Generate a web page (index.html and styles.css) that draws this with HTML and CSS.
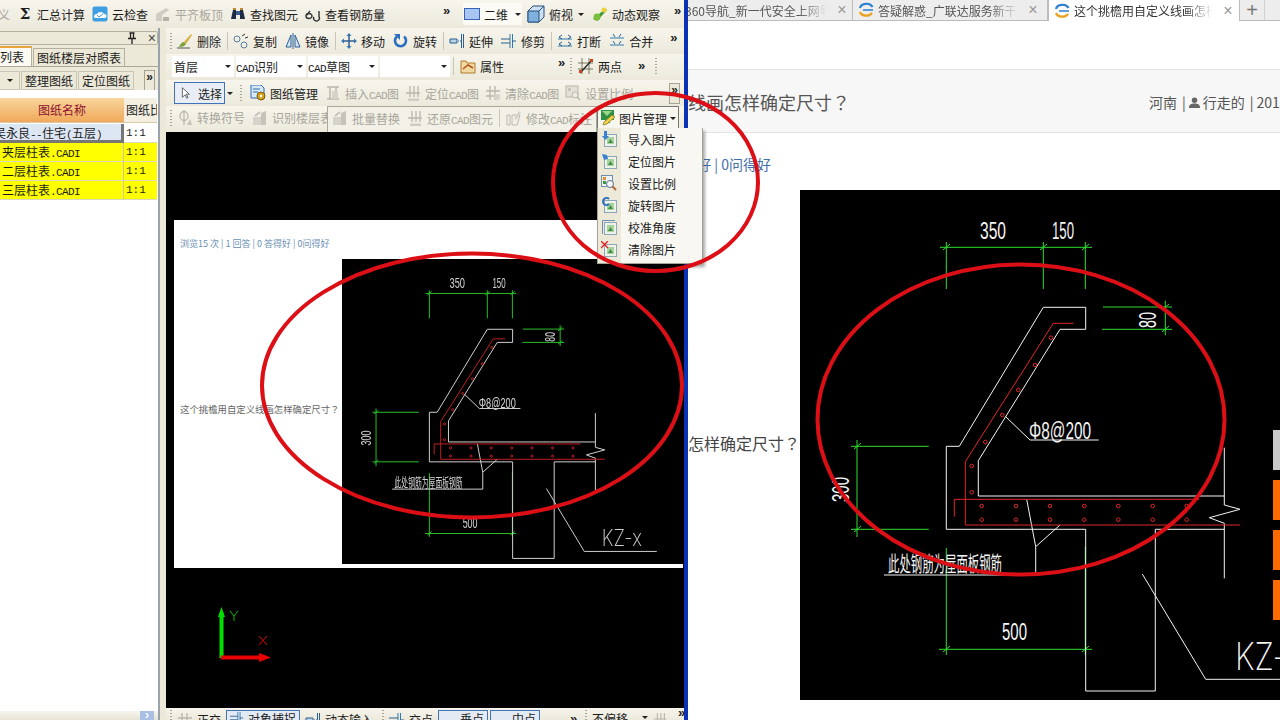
FILE: index.html
```html
<!DOCTYPE html>
<html lang="zh-CN">
  <head>
    <meta charset="UTF-8" />
    <title>图纸管理</title>
    <link rel="stylesheet" href="styles.css">
  </head>
  <body>
    <!-- shared icons and the CAD drawing, used by both windows -->
    <svg class="sprite" xmlns="http://www.w3.org/2000/svg">
      <symbol id="i-cloud" viewBox="0 0 16 16"><rect x="0.5" y="0.5" width="15" height="15" rx="2" fill="#3f9fe2"/><path d="M2 11a3 3 0 0 1 3-3 4 4 0 0 1 7 0 2 2 0 0 1 1 4H4a2 2 0 0 1-2-1z" fill="#fff"/><path d="M5 9l2 2 4-3" stroke="#3f9fe2" fill="none"/></symbol>
      <symbol id="i-level" viewBox="0 0 16 16"><path d="M1 15V8l10-6 3 2-7 5v6z" fill="#cfcdc3"/><path d="M8 15v-4h6v4z" fill="#b5b3a8"/></symbol>
      <symbol id="i-bino" viewBox="0 0 16 16"><path d="M1 13l2-9h3v9zM10 13V4h3l2 9z" fill="#1d2a44"/><rect x="6" y="5" width="4" height="4" fill="#3c5a8a"/><rect x="3" y="2" width="3" height="2" fill="#c88a2c"/><rect x="10" y="2" width="3" height="2" fill="#c88a2c"/></symbol>
      <symbol id="i-glass" viewBox="0 0 16 16"><path d="M1 10a3 2.500 0 1 0 6 0 3 2.500 0 1 0-6 0M9 11a3 2.500 0 1 0 5 0V5M5 5L2 9" fill="none" stroke="#333" stroke-width="1.400"/></symbol>
      <symbol id="i-plane" viewBox="0 0 16 16"><rect x="0.500" y="2.500" width="15" height="11" fill="#a9c6f2" stroke="#3563b5"/></symbol>
      <symbol id="i-cube" viewBox="0 0 18 18"><path d="M1 6l5-5h11v11l-5 5H1z" fill="#cfe0f2" stroke="#24507f"/><path d="M1 6h11v11H1z" fill="#7fb0dd" stroke="#24507f"/><path d="M12 6l5-5" stroke="#24507f"/></symbol>
      <symbol id="i-orbit" viewBox="0 0 16 16"><path d="M1 13L13 3l2 1L5 15z" fill="#3f9a2e"/><circle cx="5" cy="11" r="3.500" fill="#78bf3f"/><circle cx="12" cy="4" r="2.500" fill="#e8d23a"/></symbol>
      <symbol id="i-brush" viewBox="0 0 16 16"><path d="M7 9L14 1l1 1-6 9z" fill="#d6b03a"/><path d="M2 14c1-3 3-5 5-5l2 2c-1 2-3 3-7 3z" fill="#7da03a"/><path d="M0 15h13" stroke="#555"/></symbol>
      <symbol id="i-copy" viewBox="0 0 16 16"><circle cx="4" cy="6" r="3" fill="none" stroke="#5d7f9f"/><circle cx="11" cy="12" r="3" fill="none" stroke="#5d7f9f"/><path d="M9 3l3-2M12 5l3-1" stroke="#333"/></symbol>
      <symbol id="i-mirror" viewBox="0 0 16 16"><path d="M6 2L1 14h5zM10 2l5 12h-5z" fill="#d4e3f3" stroke="#2b6296"/><path d="M8 0v16" stroke="#2b6296"/></symbol>
      <symbol id="i-move" viewBox="0 0 16 16"><path d="M8 1v14M1 8h14" stroke="#2d5f90" stroke-width="1.500"/><path d="M8 0l2.500 3h-5zM8 16l2.500-3h-5zM0 8l3-2.500v5zM16 8l-3-2.500v5z" fill="#3a76b0"/></symbol>
      <symbol id="i-rotate" viewBox="0 0 16 16"><path d="M4 3.500a5.500 5.500 0 1 0 7 0" fill="none" stroke="#2c6fc0" stroke-width="2.600"/><path d="M1 1h6v6z" fill="#2c6fc0"/></symbol>
      <symbol id="i-extend" viewBox="0 0 16 16"><path d="M14.500 1v14M12.500 1v14" stroke="#2d5f90"/><path d="M1 6h7v4H1z" fill="#bcd4ea" stroke="#2d5f90"/><path d="M9 8h3" stroke="#2d5f90" stroke-dasharray="1 1"/></symbol>
      <symbol id="i-trim" viewBox="0 0 16 16"><path d="M9 1v14M11.500 1v14" stroke="#2d7ab0"/><path d="M0 6h9M0 10h9M11 8h4" stroke="#2d5f90"/></symbol>
      <symbol id="i-break" viewBox="0 0 16 16"><path d="M1 6h14M1 13h14" stroke="#2d7ab0"/><path d="M5 2L2 4l3 2M11 2l3 2-3 2M5 9l-3 2 3 2M11 9l3 2-3 2" fill="none" stroke="#2d5f90"/></symbol>
      <symbol id="i-merge" viewBox="0 0 16 16"><path d="M1 5h14M1 12h14" stroke="#2d7ab0"/><path d="M4 1l2 3M12 1l-2 3M4 8l2 3M12 8l-2 3" stroke="#2d5f90"/></symbol>
      <symbol id="i-attr" viewBox="0 0 16 16"><path d="M1 3h5l1 2h8v10H1z" fill="#f2d9a2" stroke="#b07a28"/><path d="M3 11l5-4 5 3" fill="none" stroke="#b3541a" stroke-width="1.500"/></symbol>
      <symbol id="i-twopt" viewBox="0 0 16 16"><path d="M0 5h15M0 11h15M4 0v16M11 0v16" stroke="#5a5a40" stroke-width="0.800"/><path d="M2 15L14 2" stroke="#222" stroke-width="1.300"/><rect x="12" y="1" width="3" height="3" fill="#c8451f"/><rect x="1" y="12" width="3" height="3" fill="#c8451f"/></symbol>
      <symbol id="i-arrow" viewBox="0 0 16 16"><path d="M5 2v11l3-3 2 4 1.500-.8-2-3.800H13z" fill="#fff" stroke="#555"/></symbol>
      <symbol id="i-sheet" viewBox="0 0 16 16"><path d="M1 0h10l3 3v10H1z" fill="#d9e8f8" stroke="#2d6cb0"/><path d="M3 4h7M3 7h5" stroke="#2d6cb0"/><circle cx="11" cy="11" r="4" fill="#d9a520" stroke="#7a5a10"/><circle cx="11" cy="11" r="1.200" fill="#fff"/></symbol>
      <symbol id="i-ginsert" viewBox="0 0 16 16"><path d="M2 2h12M2 14h12M5 2v12M11 2v12" stroke="#b9b7ac" stroke-width="1.500"/><rect x="7" y="6" width="6" height="8" fill="#d5d3c9"/></symbol>
      <symbol id="i-gpos" viewBox="0 0 16 16"><path d="M1 8h14M5 1v11M9 1v11M13 1v11" stroke="#b9b7ac" stroke-width="1.300"/><path d="M3 15h11" stroke="#cfcdc3" stroke-width="3"/></symbol>
      <symbol id="i-gclear" viewBox="0 0 16 16"><path d="M1 6h14M1 11h14M5 1v14M10 1v14" stroke="#b9b7ac" stroke-width="1.300"/><circle cx="12" cy="12" r="3" fill="#d5d3c9"/></symbol>
      <symbol id="i-gscale" viewBox="0 0 16 16"><rect x="1" y="1" width="12" height="11" fill="#e3e1d7" stroke="#b9b7ac"/><rect x="3" y="3" width="3" height="3" fill="#c6c4ba"/><circle cx="10" cy="10" r="3" fill="#ecebe3" stroke="#b9b7ac"/><path d="M12 12l3 3" stroke="#b9b7ac" stroke-width="1.500"/></symbol>
      <symbol id="i-gsym" viewBox="0 0 16 16"><ellipse cx="7" cy="6" rx="4" ry="4.500" fill="none" stroke="#bbb9ae" stroke-width="1.300"/><path d="M7 0v15" stroke="#bbb9ae" stroke-width="1.300"/><path d="M10 15l3-6 2 6z" fill="#c6c4ba"/></symbol>
      <symbol id="i-gfloor" viewBox="0 0 16 16"><rect x="1" y="7" width="8" height="8" fill="#d6d4ca"/><path d="M9 15V3l5-2v14z" fill="#c6c4ba"/><path d="M3 6l5-4" stroke="#c6c4ba" stroke-width="2"/></symbol>
      <symbol id="i-gedit" viewBox="0 0 16 16"><path d="M1 5h3v10H1zM6 5h8l-3 10H6z" fill="none" stroke="#bbb9ae"/><path d="M8 8l5-7 2 2-5 7z" fill="#d6d4ca"/></symbol>
      <symbol id="i-picmgr" viewBox="0 0 16 16"><rect x="1" y="0" width="13" height="10" fill="#2f8f43"/><path d="M2 1l5 5 5-5z" fill="#9bd68a"/><path d="M5 10h5v3H5z" fill="#2f8f43"/><path d="M3 15l1-3 8-7 3 2-8 7z" fill="#f0cf4a" stroke="#8a7320" stroke-width="0.700"/></symbol>
      <symbol id="i-pic" viewBox="0 0 16 16"><rect x="3.500" y="3.500" width="12" height="12" fill="#eef2ea" stroke="#8fa6b8"/><rect x="6" y="6" width="7" height="7" fill="#a7d29a"/><path d="M7 12l2.500-4 2.500 4z" fill="#3f8f4f"/></symbol>
      <symbol id="i-person" viewBox="0 0 12 12"><circle cx="6" cy="3.500" r="3" fill="#666"/><path d="M0 12c0-4 2-5 6-5s6 1 6 5z" fill="#666"/></symbol>
      <symbol id="i-pin" viewBox="0 0 10 12"><path d="M2.500 1h5M3.500 1v5M6.500 1v5M1 6.500h8M5 7v5" fill="none" stroke="#222" stroke-width="1.300"/></symbol>
      <symbol id="i-ie" viewBox="0 0 16 16"><path d="M2 6a6.500 5 0 0 1 12.500-1" fill="none" stroke="#2a7fd0" stroke-width="2.200"/><path d="M2 10a6.500 5 0 0 0 12 1" fill="none" stroke="#e9a21f" stroke-width="2.200"/><path d="M5 8h10" stroke="#2a7fd0" stroke-width="1.500"/></symbol>

      <symbol id="cad-drawing" viewBox="0 0 571 510">
        <g class="dim">
          <path d="M140 57.300H292M146.300 52v47M243.300 52v47M285.300 52v47"/>
          <path d="M303 117h69M302 139.300h70M365.300 110.700v34.600"/>
          <path d="M57 250v97M51 256.300h77.700M51 339.300h77.700"/>
          <path d="M139 459.300h153M146.300 358v107M285.300 357v108"/>
          <path d="M143 60l7-6M240 60l7-6M282 60l7-6M362 120l7-6M362 142l7-6M54 259l7-6M54 342l7-6M143 462l7-6M282 462l7-6"/>
        </g>
        <g class="line">
          <path d="M146.300 256.300h13L243.300 117.300h42.400v22H260L178.300 270.700V306H424.300"/>
          <path d="M146.300 256.300v83h139.400V501h69.600V339.300h69"/>
          <path d="M424.300 257.700V315L440 319.300 409.300 327.700 424.300 333.300V388.300"/>
          <path d="M205.700 226.700L230 250h68.700"/>
          <path d="M226.700 309.300L235.700 356.700 260 335M235.700 356.700V385H84"/>
          <path d="M342.300 384L405.700 489.300H527"/>
        </g>
        <g class="rebar">
          <path d="M273.300 133.300h-20L165.300 271.700V335H440"/>
          <path d="M154.300 326.700V309.300H399.300"/>
          <circle cx="251" cy="147.700" r="1.800"/><circle cx="235" cy="175" r="1.800"/><circle cx="218.300" cy="200" r="1.800"/><circle cx="202.300" cy="225" r="1.800"/><circle cx="185.300" cy="252" r="1.800"/><circle cx="171.700" cy="276" r="1.800"/><circle cx="171.700" cy="302.300" r="1.800"/>
          <circle cx="181.700" cy="316" r="1.800"/><circle cx="216" cy="316" r="1.800"/><circle cx="250" cy="316" r="1.800"/><circle cx="284.300" cy="316" r="1.800"/><circle cx="318.300" cy="316" r="1.800"/><circle cx="352.700" cy="316" r="1.800"/><circle cx="386.700" cy="316" r="1.800"/>
          <circle cx="181.700" cy="329.700" r="1.800"/><circle cx="216" cy="329.700" r="1.800"/><circle cx="250" cy="329.700" r="1.800"/><circle cx="284.300" cy="329.700" r="1.800"/><circle cx="318.300" cy="329.700" r="1.800"/><circle cx="352.700" cy="329.700" r="1.800"/><circle cx="386.700" cy="329.700" r="1.800"/>
        </g>
        <g class="label">
          <text x="180" y="49" font-size="24" textLength="26" lengthAdjust="spacingAndGlyphs">350</text>
          <text x="252" y="49" font-size="24" textLength="22" lengthAdjust="spacingAndGlyphs">150</text>
          <text x="202" y="450" font-size="24" textLength="25" lengthAdjust="spacingAndGlyphs">500</text>
          <text x="229" y="249" font-size="23" textLength="62" lengthAdjust="spacingAndGlyphs">Φ8@200</text>
          <text transform="translate(356 138) rotate(-90)" font-size="23" textLength="16" lengthAdjust="spacingAndGlyphs">80</text>
          <text transform="translate(49 312) rotate(-90)" font-size="24" textLength="25" lengthAdjust="spacingAndGlyphs">300</text>
          <text class="han" x="88" y="381" font-size="21" textLength="114" lengthAdjust="spacingAndGlyphs">此处钢筋为屋面板钢筋</text>
          <text class="thin" x="435" y="480" font-size="38" textLength="67" lengthAdjust="spacingAndGlyphs">KZ-x</text>
        </g>
      </symbol>
    </svg>

    <div class="screen">
      <div class="app">
        <div class="top">
          <div class="top-main">
            <span class="off cut">义</span>
            <div class="item"><span class="sigma">Σ</span><span>汇总计算</span></div>
            <div class="item"><svg class="ic"><use href="#i-cloud"/></svg><span>云检查</span></div>
            <div class="item off"><svg class="ic"><use href="#i-level"/></svg><span>平齐板顶</span></div>
            <div class="item"><svg class="ic"><use href="#i-bino"/></svg><span>查找图元</span></div>
            <div class="item"><svg class="ic"><use href="#i-glass"/></svg><span>查看钢筋量</span></div>
            <span class="more">»</span>
          </div>
          <div class="view-plane">
            <div class="item"><svg class="ic"><use href="#i-plane"/></svg><span>二维</span></div>
            <i class="caret"></i>
          </div>
          <div class="item view-cube"><svg class="ic big"><use href="#i-cube"/></svg><span>俯视</span></div>
          <i class="caret"></i>
          <div class="item"><svg class="ic"><use href="#i-orbit"/></svg><span>动态观察</span></div>
          <span class="more m-top">»</span>
        </div>

        <div class="work">
          <div class="panel">
            <div class="panel-title"><svg class="pin"><use href="#i-pin"/></svg><span class="close">×</span></div>
            <div class="tabs">
              <span class="tab on">列表</span>
              <span class="tab">图纸楼层对照表</span>
            </div>
            <div class="panel-body">
              <div class="panel-tools">
                <span class="p-btn stub"><i class="caret"></i></span>
                <span class="p-btn">整理图纸</span>
                <span class="p-btn">定位图纸</span>
                <span class="more boxed">»</span>
              </div>
              <div class="sheet">
                <div class="head">图纸名称</div>
                <div class="head2">图纸比</div>
                <div class="name sel"><span class="name-cut">吴永良<span class="lat">--</span>住宅<span class="lat">(</span>五层<span class="lat">)</span></span></div>
                <div class="ratio">1:1</div>
                <div class="name hl">夹层柱表<span class="lat">.CADI</span></div>
                <div class="ratio hl">1:1</div>
                <div class="name hl">二层柱表<span class="lat">.CADI</span></div>
                <div class="ratio hl">1:1</div>
                <div class="name hl">三层柱表<span class="lat">.CADI</span></div>
                <div class="ratio hl">1:1</div>
              </div>
              <div class="panel-foot"><span class="chev">›</span></div>
            </div>
          </div>

          <div class="main">
            <div class="row row-edit">
              <span class="grip"></span>
              <div class="item"><svg class="ic"><use href="#i-brush"/></svg><span>删除</span></div>
              <span class="sep"></span>
              <div class="item"><svg class="ic"><use href="#i-copy"/></svg><span>复制</span></div>
              <div class="item"><svg class="ic"><use href="#i-mirror"/></svg><span>镜像</span></div>
              <span class="sep"></span>
              <div class="item"><svg class="ic"><use href="#i-move"/></svg><span>移动</span></div>
              <div class="item"><svg class="ic"><use href="#i-rotate"/></svg><span>旋转</span></div>
              <span class="sep"></span>
              <div class="item"><svg class="ic"><use href="#i-extend"/></svg><span>延伸</span></div>
              <div class="item"><svg class="ic"><use href="#i-trim"/></svg><span>修剪</span></div>
              <span class="sep"></span>
              <div class="item"><svg class="ic"><use href="#i-break"/></svg><span>打断</span></div>
              <div class="item"><svg class="ic"><use href="#i-merge"/></svg><span>合并</span></div>
              <span class="more">»</span>
            </div>

            <div class="row row-layer">
              <div class="combo c-floor"><span>首层</span><i class="caret"></i></div>
              <div class="combo c-cad"><span><span class="lat">CAD</span>识别</span><i class="caret"></i></div>
              <div class="combo c-cad"><span><span class="lat">CAD</span>草图</span><i class="caret"></i></div>
              <div class="combo c-cad"><span></span><i class="caret"></i></div>
              <span class="sep"></span>
              <div class="item attr"><svg class="ic"><use href="#i-attr"/></svg><span>属性</span></div>
              <span class="more m-attr">»</span>
              <span class="grip"></span>
              <div class="item"><svg class="ic"><use href="#i-twopt"/></svg><span>两点</span></div>
              <span class="more m-two">»</span>
              <span class="grip"></span>
            </div>

            <div class="row row-cad">
              <div class="btn-select"><svg class="ic small"><use href="#i-arrow"/></svg><span>选择</span></div>
              <i class="caret"></i>
              <span class="grip"></span>
              <div class="item mgr"><svg class="ic"><use href="#i-sheet"/></svg><span>图纸管理</span></div>
              <div class="item off"><svg class="ic"><use href="#i-ginsert"/></svg><span>插入<span class="lat">CAD</span>图</span></div>
              <div class="item off"><svg class="ic"><use href="#i-gpos"/></svg><span>定位<span class="lat">CAD</span>图</span></div>
              <div class="item off"><svg class="ic"><use href="#i-gclear"/></svg><span>清除<span class="lat">CAD</span>图</span></div>
              <div class="item off"><svg class="ic"><use href="#i-gscale"/></svg><span>设置比例</span></div>
              <span class="more boxed m-cad">»</span>
            </div>

            <div class="row row-conv">
              <span class="grip"></span>
              <div class="conv-left">
                <div class="item off"><svg class="ic"><use href="#i-gsym"/></svg><span>转换符号</span></div>
                <div class="item off"><svg class="ic"><use href="#i-gfloor"/></svg><span>识别楼层表</span></div>
              </div>
              <div class="float-bar">
                <div class="item off"><svg class="ic"><use href="#i-gfloor"/></svg><span>批量替换</span></div>
                <div class="item off"><svg class="ic"><use href="#i-gpos"/></svg><span>还原<span class="lat">CAD</span>图元</span></div>
                <span class="sep"></span>
                <div class="item off"><svg class="ic"><use href="#i-gedit"/></svg><span>修改<span class="lat">CAD</span>标注</span></div>
              </div>
              <div class="btn-pic"><svg class="ic"><use href="#i-picmgr"/></svg><span>图片管理</span><i class="caret"></i></div>
            </div>

            <div class="canvas">
              <div class="mini">
                <div class="mini-stats">浏览15 次 | 1 回答 | 0 答得好 | 0问得好</div>
                <div class="mini-body">
                  <div class="mini-q">这个挑檐用自定义线画怎样确定尺寸<span class="qm" lang="zh-Hant">？</span></div>
                  <svg class="mini-cad"><use href="#cad-drawing"/></svg>
                </div>
              </div>
              <!-- world axes sit on the free canvas -->
              <svg class="axes" viewBox="0 0 60 60">
                <path d="M5.500 51V6" stroke="#00e000" stroke-width="4"/>
                <path d="M5.500 0l3.500 10H2z" fill="#00e000"/>
                <path d="M5 50.500h44" stroke="#e80000" stroke-width="4"/>
                <path d="M55 50.500l-12 4.500v-9z" fill="#e80000"/>
                <path d="M14 4l4 5 4-5M18 9v5" fill="none" stroke="#00c000"/>
                <path d="M43 29l8 9M51 29l-8 9" fill="none" stroke="#e00000"/>
              </svg>
            </div>

            <div class="row row-status">
              <span class="grip"></span>
              <div class="item"><svg class="ic"><use href="#i-gclear"/></svg><span>正交</span></div>
              <div class="btn-on wide"><svg class="ic small"><use href="#i-trim"/></svg><span>对象捕捉</span></div>
              <div class="item"><svg class="ic"><use href="#i-extend"/></svg><span>动态输入</span></div>
              <span class="grip g-snap"></span>
              <div class="item"><svg class="ic"><use href="#i-trim"/></svg><span>交点</span></div>
              <div class="btn-on"><span>垂点</span></div>
              <div class="btn-on mid"><span>中点</span></div>
              <span class="more m-snap">»</span>
              <span class="grip"></span>
              <span>不偏移</span>
              <i class="caret"></i>
              <svg class="ic small"><use href="#i-gpos"/></svg>
              <span class="more m-end">»</span>
            </div>
          </div>
        </div>
      </div>

      <div class="divider"></div>

      <div class="browser">
        <div class="tabstrip">
          <div class="b-tab first"><span class="b-title">360导航_新一代安全上网导航</span><span class="b-x">×</span></div>
          <div class="b-tab"><svg class="ie"><use href="#i-ie"/></svg><span class="b-title">答疑解惑_广联达服务新干线</span><span class="b-x">×</span></div>
          <div class="b-tab active"><svg class="ie"><use href="#i-ie"/></svg><span class="b-title">这个挑檐用自定义线画怎样确定尺寸</span><span class="b-x">×</span></div>
          <div class="b-new">+</div>
        </div>
        <div class="b-gap"></div>
        <div class="q-band">
          <div class="q-title"><span>这个挑檐用自定义线画怎样确定尺寸<span class="qm" lang="zh-Hant">？</span></span></div>
          <div class="q-meta">河南<b>|</b><svg class="person"><use href="#i-person"/></svg>行走的<b>|</b>2015-01-01</div>
        </div>
        <div class="stats"><span>浏览15 次 | 1 回答 | 0 答得好 | 0问得好</span></div>
        <div class="q-body">
          <div class="q-text"><span>这个挑檐用自定义线画怎样确定尺寸<span class="qm" lang="zh-Hant">？</span></span></div>
          <svg class="big-cad"><use href="#cad-drawing"/></svg>
        </div>
      </div>

      <!-- things floating over the windows -->
      <div class="menu">
        <div class="m-item"><svg class="ic"><use href="#i-pic"/><path d="M3 0v5H1l3.500 4L8 5H6V0z" fill="#3a7fd0"/></svg><span>导入图片</span></div>
        <div class="m-item"><svg class="ic"><use href="#i-pic"/><path d="M1 1l5 1 1 4-4 1z" fill="#3a7fd0"/></svg><span>定位图片</span></div>
        <div class="m-item"><svg class="ic"><rect x="0.500" y="0.500" width="11" height="11" fill="#eef2f8" stroke="#6f8fb0"/><rect x="2" y="2" width="3" height="3" fill="#e0902c"/><rect x="2" y="6" width="3" height="3" fill="#3a9a4c"/><circle cx="9" cy="9" r="3.500" fill="#f4f8fc" stroke="#5a6f86"/><path d="M11.500 11.500L15 15" stroke="#b8643a" stroke-width="2"/></svg><span>设置比例</span></div>
        <div class="m-item"><svg class="ic"><use href="#i-pic"/><path d="M8 2a3.500 3.500 0 1 0 0 5" fill="none" stroke="#2c6fc0" stroke-width="2"/></svg><span>旋转图片</span></div>
        <div class="m-item"><svg class="ic"><use href="#i-pic"/><path d="M1.500 15V1.500H14" fill="none" stroke="#6f8fb0"/></svg><span>校准角度</span></div>
        <div class="m-item"><svg class="ic"><use href="#i-pic"/><path d="M0 0l7 7M7 0L0 7" stroke="#e02020" stroke-width="1.300"/></svg><span>清除图片</span></div>
      </div>
      <div class="side-dock">
        <span class="dock-grey"></span>
        <span class="dock-orange"></span>
        <span class="dock-orange"></span>
        <span class="dock-orange"></span>
      </div>
      <svg class="marks" viewBox="0 0 1280 720">
        <ellipse cx="655.500" cy="182" rx="102.500" ry="89"/>
        <ellipse cx="472" cy="385.500" rx="210" ry="132"/>
        <ellipse cx="1021" cy="419.500" rx="203.500" ry="155"/>
      </svg>
    </div>
  </body>
</html>
```

FILE: styles.css
```css
* {
  box-sizing: border-box;
}
html, body {
  margin: 0;
  padding: 0;
  background: #fff;
}
body {
  font-family: "Noto Sans CJK SC", "Liberation Sans", sans-serif;
  font-size: 12px;
  color: #1c1c1c;
}
i {
  font-style: normal;
}
.sprite {
  position: absolute;
  width: 0;
  height: 0;
}
.screen {
  position: relative;
  display: flex;
  width: 1280px;
  height: 720px;
  overflow: hidden;
}
/* full width question mark sits centred in the TC cut */
.qm {
  font-family: "Noto Sans CJK TC", sans-serif;
}

/* left window: the CAD program */
.app {
  display: flex;
  flex-direction: column;
  width: 684px;
  height: 720px;
  flex: none;
  background: #ece9d8;
}
.top {
  display: flex;
  align-items: center;
  height: 28px;
  flex: none;
  gap: 8px;
  background: linear-gradient(#f7f5ec, #ece9dc);
}
.top-main {
  display: flex;
  align-items: center;
  gap: 7px;
  width: 456px;
  margin-left: -2px;
}
.top-main .more {
  margin-left: auto;
}
.cut {
  width: 12px;
}
.sigma {
  width: 16px;
  font: bold 15px "DejaVu Serif", serif;
  text-align: center;
}
.view-plane {
  display: flex;
  align-items: center;
  gap: 7px;
  height: 22px;
  padding: 0 1px;
  margin-left: 2px;
  background: #fbfaf5;
}
.view-cube {
  margin-left: -3px;
}
.top > .caret {
  margin-left: -3px;
}
.m-top {
  margin-left: 6px;
}
.item {
  display: flex;
  align-items: center;
  gap: 4px;
  flex: none;
  white-space: nowrap;
}
.off {
  color: #a8a69b;
}
.ic {
  width: 16px;
  height: 16px;
  flex: none;
}
.ic.big {
  width: 18px;
  height: 18px;
}
.ic.small {
  width: 14px;
  height: 14px;
}
.lat {
  font-family: "Liberation Mono", monospace;
  font-size: 11px;
  letter-spacing: -0.600px;
}
.more {
  flex: none;
  width: 10px;
  font: bold 13px/12px "Liberation Sans", sans-serif;
  color: #222;
  margin-top: -6px;
}
.caret {
  flex: none;
  width: 0;
  height: 0;
  border: 3px solid transparent;
  border-top: 3px solid #222;
  border-bottom: 0;
}
.grip {
  flex: none;
  width: 2px;
  height: 16px;
  background: repeating-linear-gradient(#a9a797 0 1px, transparent 1px 3px);
}
.sep {
  flex: none;
  width: 1px;
  height: 18px;
  margin: 0 -3px 0 -2px;
  background: #c9c6b5;
}

.work {
  display: flex;
  flex: 1;
  min-height: 0;
}

/* drawing list panel */
.panel {
  display: flex;
  flex-direction: column;
  width: 160px;
  flex: none;
  border-right: 2px solid #9aa3ad;
}
.panel-title {
  display: flex;
  align-items: center;
  justify-content: flex-end;
  gap: 11px;
  height: 14px;
  margin: 3px 0 1px;
  padding-right: 1px;
  border: 1px solid #b4b1a0;
  border-left: 0;
  border-radius: 0 2px 2px 0;
  background: #ece9d8;
}
.pin {
  width: 10px;
  height: 12px;
}
.close {
  font: 14px/12px "Liberation Sans", sans-serif;
  color: #444;
}
.tabs {
  display: flex;
  align-items: flex-end;
  height: 20px;
  flex: none;
  gap: 1px;
}
.tab {
  height: 18px;
  padding: 0 3px;
  line-height: 17px;
  white-space: nowrap;
  background: #ece9d8;
  border: 1px solid #b4b1a0;
  border-bottom: 0;
}
.tab.on {
  height: 20px;
  width: 32px;
  padding: 0;
  line-height: 18px;
  background: #fbfaf3;
  border-top: 2px solid #e8a33d;
  border-left: 0;
}
.panel-body {
  position: relative;
  display: flex;
  flex-direction: column;
  flex: 1;
  border-top: 1px solid #aca899;
  background: #fff;
}
.panel-tools {
  display: flex;
  align-items: center;
  height: 23px;
  flex: none;
  gap: 1px;
  padding-top: 3px;
  margin-bottom: 8px;
  overflow: hidden;
  background: #ece9d8;
}
.p-btn {
  display: flex;
  align-items: center;
  justify-content: center;
  flex: none;
  width: 56px;
  height: 19px;
  white-space: nowrap;
  border: 1px solid #c9c6b5;
  background: #ece9d8;
}
.p-btn.stub {
  width: 20px;
  border-left: 0;
}
.panel-tools .boxed {
  margin-left: 9px;
}
.sheet {
  display: grid;
  grid-template-columns: 124px 33px;
  grid-auto-rows: 19px;
  flex: none;
}
.head {
  height: 25px;
  line-height: 24px;
  text-align: center;
  color: #8e1030;
  background: linear-gradient(#f8d59d, #f0a95a);
  border-bottom: 1px solid #d8c8a8;
}
.head2 {
  height: 25px;
  line-height: 24px;
  white-space: nowrap;
  overflow: hidden;
  padding-left: 2px;
  background: #f3f0e2;
  border-bottom: 1px solid #d8c8a8;
}
.sheet .name,
.sheet .ratio {
  margin-top: 7px;
  margin-bottom: -7px;
  line-height: 18px;
  white-space: nowrap;
  overflow: hidden;
  border-bottom: 1px solid #d9d9c0;
}
.name {
  padding-left: 2px;
  border-right: 1px solid #c8c8a8;
}
.ratio {
  padding-left: 2px;
  font-family: "Liberation Mono", monospace;
  font-size: 11px;
}
.hl {
  background: #ffff00;
}
.sheet .sel {
  padding-left: 0;
  background: #dde6f3;
  border-right: 3px solid #777;
  border-bottom: 3px solid #777;
}
.name-cut {
  display: block;
  margin-left: -6px;
}
.panel-foot {
  position: absolute;
  left: 0;
  right: 0;
  bottom: 0;
  height: 9px;
  background: linear-gradient(#f7f6ef, #e6e3d4);
}
.chev {
  position: absolute;
  right: 4px;
  top: 0;
  width: 14px;
  height: 12px;
  font: bold 12px/9px "Liberation Sans", sans-serif;
  text-align: center;
  color: #fff;
  background: #a9bfe3;
}

/* toolbars over the canvas */
.main {
  display: flex;
  flex-direction: column;
  flex: 1;
  min-width: 0;
  margin-left: 6px;
}
.row {
  display: flex;
  align-items: center;
  height: 26px;
  flex: none;
  gap: 8px;
  padding-left: 4px;
  white-space: nowrap;
  background: linear-gradient(#f7f5ec, #ece9dc);
}
.row-edit .grip {
  margin-right: -3px;
}
.row-edit .more {
  margin-left: 9px;
}
.row-layer {
  gap: 2px;
  padding: 0 0 2px 6px;
}
.row-layer .sep {
  margin: 0 4px 0 1px;
}
.combo {
  display: flex;
  align-items: center;
  justify-content: space-between;
  height: 21px;
  padding-right: 3px;
  background: #fff;
}
.c-floor {
  width: 62px;
  padding-left: 2px;
}
.c-cad {
  width: 70px;
}
.attr {
  width: 44px;
}
.m-attr {
  margin-left: 52px;
}
.row-layer .grip {
  margin: 0 4px 0 0;
}
.m-two {
  margin: 0 5px 0 14px;
}
.row-cad {
  padding-left: 8px;
}
.btn-select {
  display: flex;
  align-items: center;
  gap: 6px;
  width: 51px;
  height: 22px;
  padding-left: 3px;
  border: 1px solid #3f74b8;
  background: #e9eef6;
}
.row-cad .caret {
  margin-left: -6px;
}
.row-cad .grip {
  margin-left: -1px;
}
.mgr {
  margin-right: 1px;
}
.row-cad .off {
  margin-left: -2px;
}
.m-cad {
  position: relative;
  margin-left: auto;
  margin-right: 4px;
}
.boxed {
  width: 11px;
  height: 21px;
  margin-top: 0;
  line-height: 13px;
  border: 1px solid #a5a394;
  background: #ece9d8;
  font-size: 12px;
  text-align: center;
}
.row-conv {
  gap: 0;
  align-items: stretch;
}
.row-conv .grip {
  align-self: center;
  margin: 0 5px 3px 0;
}
.conv-left {
  display: flex;
  align-items: center;
  gap: 7px;
  width: 150px;
  padding-bottom: 3px;
  overflow: hidden;
}
.float-bar {
  display: flex;
  align-items: center;
  gap: 7px;
  width: 270px;
  padding: 0 0 3px 4px;
  border: 1px solid #aca899;
  border-bottom: 0;
  background: #f3f1e7;
}
.float-bar .sep {
  margin: 0 -1px 0 -1px;
}
.btn-pic {
  display: flex;
  align-items: center;
  gap: 3px;
  width: 82px;
  padding: 0 0 3px 2px;
  border: 1px solid #777;
  border-bottom: 0;
  background: #f7f6ef;
}
.canvas {
  position: relative;
  flex: 1;
  min-height: 0;
  padding: 88px 1px 0 8px;
  background: #000;
}
.row-status {
  height: 12px;
  overflow: hidden;
  align-items: flex-start;
  gap: 5px;
  padding-top: 4px;
}
.row-status > .item,
.row-status > span {
  line-height: 14px;
}
.row-status .caret {
  margin: 4px 0 0 9px;
}
.row-status .grip {
  margin-top: -2px;
}
.btn-on {
  display: flex;
  align-items: center;
  justify-content: flex-end;
  gap: 4px;
  width: 50px;
  height: 16px;
  margin-top: -2px;
  padding-right: 3px;
  border: 1px solid #3f74b8;
  background: #e4eaf3;
  flex: none;
}
.btn-on.wide {
  width: 74px;
}
.btn-on.mid {
  margin-left: -3px;
}
.g-snap {
  margin-left: 4px;
}
.m-snap {
  margin: 0 0 0 25px;
}
.m-end {
  margin-left: 6px;
}

/* pasted screenshot inside the CAD canvas */
.mini {
  width: 509px;
  height: 348px;
  background: #fff;
}
.mini-stats {
  height: 38px;
  padding: 18px 0 0 6px;
  font-size: 9px;
  line-height: 12px;
  color: #6a8fb5;
}
.mini-body {
  display: flex;
  align-items: center;
  height: 306px;
}
.mini-q {
  width: 168px;
  flex: none;
  padding: 0 0 4px 6px;
  font-size: 9.400px;
  white-space: nowrap;
  color: #666;
}
.mini-cad {
  width: 342px;
  height: 305px;
  background: #000;
}
.mini-cad use {
  opacity: 0.85;
}
.axes {
  position: absolute;
  left: 50px;
  top: 475px;
  width: 60px;
  height: 60px;
}

/* CAD drawing */
.dim path,
.line path,
.rebar path,
.rebar circle {
  fill: none;
  stroke-width: 1px;
  vector-effect: non-scaling-stroke;
}
.dim path {
  stroke: #2fe02f;
}
.line path {
  stroke: #f4f4f4;
}
.rebar path,
.rebar circle {
  stroke: #e02626;
}
.label text {
  fill: #f4f4f4;
  font-family: "Liberation Sans", sans-serif;
}
.label .han {
  font-family: "Noto Sans CJK SC", sans-serif;
}
.label .thin {
  font-family: Inter, "Liberation Sans", sans-serif;
  font-weight: 200;
}

.divider {
  flex: none;
  width: 4px;
  background: #0a32b4;
}

/* right window: the web browser */
.browser {
  display: flex;
  flex-direction: column;
  flex: 1;
  min-width: 0;
  overflow: hidden;
  background: #fff;
}
.tabstrip {
  display: flex;
  align-items: stretch;
  height: 21px;
  flex: none;
  background: #ededed;
  border-bottom: 1px solid #bcbcbc;
}
.b-tab {
  display: flex;
  align-items: center;
  width: 195px;
  padding: 0 5px;
  flex: none;
  overflow: hidden;
  color: #555;
  border-right: 1px solid #bcbcbc;
}
.b-tab.first {
  width: 165px;
  padding-left: 0;
  padding-right: 1px;
}
.first .b-title {
  margin-left: -3px;
}
.b-tab.active {
  width: 192px;
  height: 21px;
  padding-right: 2px;
  background: #fff;
  color: #333;
  border-left: 1px solid #bcbcbc;
}
.ie {
  width: 16px;
  height: 16px;
  margin-right: 4px;
  flex: none;
}
.b-title {
  flex: 1;
  min-width: 0;
  overflow: hidden;
  white-space: nowrap;
  -webkit-mask-image: linear-gradient(90deg, #000 80%, transparent);
  mask-image: linear-gradient(90deg, #000 80%, transparent);
}
.b-x {
  width: 18px;
  margin-left: 6px;
  flex: none;
  font: 16px/18px "Liberation Sans", sans-serif;
  text-align: center;
  color: #999;
}
.b-new {
  width: 25px;
  font: 20px/20px "Liberation Sans", sans-serif;
  text-align: center;
  color: #777;
  border-right: 1px solid #d0d0d0;
}
.b-gap {
  height: 48px;
  flex: none;
}
.q-band {
  display: flex;
  align-items: center;
  justify-content: space-between;
  height: 64px;
  flex: none;
  padding-top: 2px;
  background: #f7f7f7;
  border-top: 1px solid #e3e3e3;
  border-bottom: 1px solid #e3e3e3;
}
.q-title {
  display: flex;
  justify-content: flex-end;
  width: 162px;
  flex: none;
  font-size: 18px;
  white-space: nowrap;
  color: #555;
}
.q-meta {
  display: flex;
  align-items: center;
  width: 131px;
  flex: none;
  overflow: hidden;
  white-space: nowrap;
  font-size: 14px;
  color: #555;
}
.q-meta b {
  margin: 0 3px 0 5px;
  font-weight: normal;
}
.person {
  width: 11px;
  height: 11px;
  margin-right: 3px;
  flex: none;
}
.stats {
  display: flex;
  justify-content: flex-end;
  width: 83px;
  height: 56px;
  flex: none;
  padding-top: 21px;
  font-size: 14px;
  line-height: 20px;
  white-space: nowrap;
  color: #3f6fa8;
}
.q-body {
  display: flex;
  align-items: center;
  height: 511px;
  flex: none;
}
.q-text {
  display: flex;
  justify-content: flex-end;
  width: 112px;
  flex: none;
  padding-bottom: 4px;
  font-size: 16px;
  white-space: nowrap;
  color: #444;
}
.big-cad {
  width: 571px;
  height: 510px;
  flex: none;
  background: #000;
}

/* popup menu, dock tabs and the red hand-drawn marks */
.menu {
  position: absolute;
  left: 597px;
  top: 128px;
  width: 106px;
  padding: 0 0 3px;
  background: linear-gradient(90deg, #ece9d8 0 23px, #f8f7f2 23px);
  border: 1px solid #a5a394;
  border-top: 0;
  box-shadow: 2px 3px 3px rgba(0, 0, 0, 0.35);
}
.m-item {
  display: flex;
  align-items: center;
  gap: 11px;
  height: 22px;
  padding-left: 3px;
}
.side-dock {
  position: absolute;
  left: 1273px;
  top: 430px;
  display: flex;
  flex-direction: column;
  gap: 10px;
  width: 7px;
}
.dock-grey,
.dock-orange {
  height: 40px;
}
.dock-grey {
  background: #c9c9c9;
}
.dock-orange {
  background: #ff6a00;
}
.marks {
  position: absolute;
  left: 0;
  top: 0;
  width: 1280px;
  height: 720px;
  pointer-events: none;
}
.marks ellipse {
  fill: none;
  stroke: #dc0f16;
  stroke-width: 4px;
}
```
